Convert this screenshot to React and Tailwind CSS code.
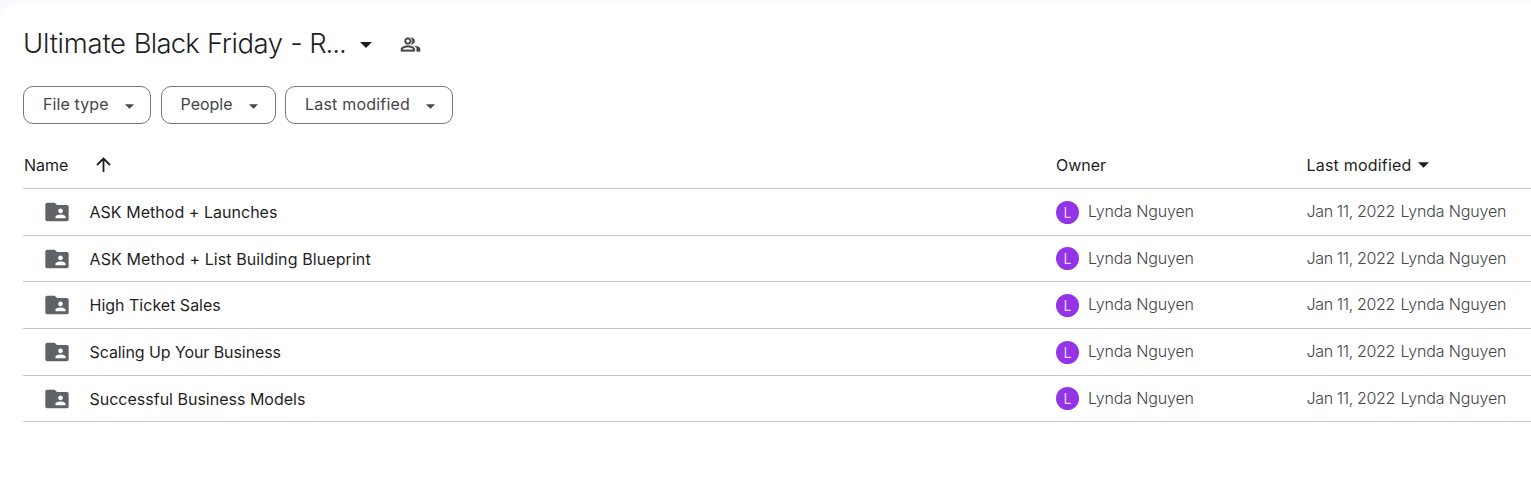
import React from "react";

const ROWS = [
  { name: "ASK Method + Launches", height: "h-[47px]", spacing: "tracking-[0.03px]" },
  { name: "ASK Method + List Building Blueprint", height: "h-[46px]", spacing: "tracking-[0.09px]" },
  { name: "High Ticket Sales", height: "h-[47px]", spacing: "tracking-[0px]" },
  { name: "Scaling Up Your Business", height: "h-[47px]", spacing: "tracking-[-0.08px]" },
  { name: "Successful Business Models", height: "h-[46px]", spacing: "tracking-[0px]" },
];

function Caret({ className }) {
  return (
    <svg viewBox="0 0 10 5" className={"shrink-0 " + className} fill="currentColor">
      <path d="M0 0h10L5 5z" />
    </svg>
  );
}

function PeopleIcon() {
  return (
    <svg viewBox="0 0 24 24" className="size-[21px] shrink-0 text-[#444746]" fill="currentColor" stroke="currentColor" strokeWidth="0.3">
      <path d="M9 12c2.21 0 4-1.79 4-4s-1.79-4-4-4-4 1.79-4 4 1.79 4 4 4zm0-6c1.1 0 2 .9 2 2s-.9 2-2 2-2-.9-2-2 .9-2 2-2zm0 7c-2.67 0-8 1.34-8 4v3h16v-3c0-2.66-5.33-4-8-4zm6 5H3v-.99C3.2 16.29 6.3 15 9 15s5.8 1.29 6 2v1zM12.51 4.05C13.43 5.11 14 6.49 14 8s-.57 2.89-1.49 3.95C14.47 11.95 17 10.04 17 8s-2.53-3.95-4.49-3.95zM16.53 13.83C18.04 14.74 19 15.87 19 17v3h4v-3c0-2.18-3.58-3.47-6.47-3.17z" />
    </svg>
  );
}

function SharedFolderIcon() {
  return (
    <svg viewBox="0 0 24 24" className="size-7 shrink-0 text-[#5f6368]" fill="currentColor">
      <path d="M20.5 6H12l-2-2H3.5C2.7 4 2 4.7 2 5.5v13c0 .8.7 1.5 1.5 1.5h17c.8 0 1.5-.7 1.5-1.5v-11c0-.8-.7-1.5-1.5-1.5zM15 9c1.1 0 2 .9 2 2s-.9 2-2 2-2-.9-2-2 .9-2 2-2zm4.3 8.4h-8.6v-1.3c0-1.4 2.9-2 4.3-2s4.3.6 4.3 2v1.3z" />
    </svg>
  );
}

function Chip({ label, className, caret }) {
  return (
    <button className={"flex h-[38px] items-center rounded-[10px] border border-[#747775] text-[16px] text-[#444746] " + className}>
      <span className="pb-[3px] whitespace-nowrap">{label}</span>
      <Caret className={"mt-[2px] h-[5px] w-[9px] " + caret} />
    </button>
  );
}

export default function App() {
  return (
    <div className="h-[501px] w-full overflow-hidden bg-[#f8fafd] pt-[3px] font-['Inter',sans-serif] text-[#1f1f1f]">
      <main className="h-full rounded-tl-[20px] bg-white pl-[23px]">
        <header className="flex h-[83px] items-center">
          <h1 className="w-[337px] pb-[2px] text-[27.5px] font-[350] whitespace-nowrap tracking-[-0.8px] [word-spacing:1px]">
            <span className="tracking-[-0.25px]">Ultimate</span> Black <span className="tracking-[-0.45px]">Friday</span>
            <span className="tracking-[-1.1px]"> - R...</span>
          </h1>
          <Caret className="h-[6px] w-[12px]" />
          <div className="ml-[28px]"><PeopleIcon /></div>
        </header>
        <div className="flex gap-[9px]">
          <Chip label="File type" className="mr-px w-[128px] pl-[19px] tracking-[0.1px]" caret="ml-auto mr-[16px]" />
          <Chip label="People" className="w-[115px] pl-[18.5px]" caret="ml-auto mr-[17px]" />
          <Chip label="Last modified" className="w-[168px] pl-[19px] tracking-[0.2px]" caret="ml-auto mr-[17px]" />
        </div>
        <div className="flex h-[65px] items-center border-b border-[#c4c7c5] pt-[18px] text-[16px]">
          <div className="flex w-[1033px] items-center pl-px">
            <span className="w-[71px]">Name</span>
            <svg viewBox="0 0 16 16" className="size-4" fill="none" stroke="currentColor" strokeWidth="1.8">
              <path d="M8.5 15V2M2 8L8.5 1.5 15 8" />
            </svg>
          </div>
          <span className="w-[250.5px]">Owner</span>
          <span className="w-[111.5px] tracking-[0.2px]">Last modified</span>
          <Caret className="h-[6px] w-[11px]" />
        </div>
        {ROWS.map((row) => (
          <div key={row.name} className={"flex items-center border-b border-[#c4c7c5] text-[16px] " + row.height}>
            <div className="flex w-[1033px] items-center pl-[20px]">
              <SharedFolderIcon />
              <span className={"ml-[18.5px] " + row.spacing}>{row.name}</span>
            </div>
            <div className="flex w-[250.5px] items-center">
              <span className="flex size-[23px] items-center justify-center rounded-full bg-[#9334e6] text-[14px] text-[#e9d2fd]">L</span>
              <span className="ml-[9px] pb-[2px] font-[360] tracking-[-0.15px] text-[#444746]">Lynda Nguyen</span>
            </div>
            <div className="flex pb-[2px] font-[360] whitespace-nowrap text-[#444746]">
              <span className="w-[94px] tracking-[-0.36px]">Jan 11, 2022</span>
              <span className="tracking-[-0.15px]">Lynda Nguyen</span>
            </div>
          </div>
        ))}
      </main>
    </div>
  );
}
